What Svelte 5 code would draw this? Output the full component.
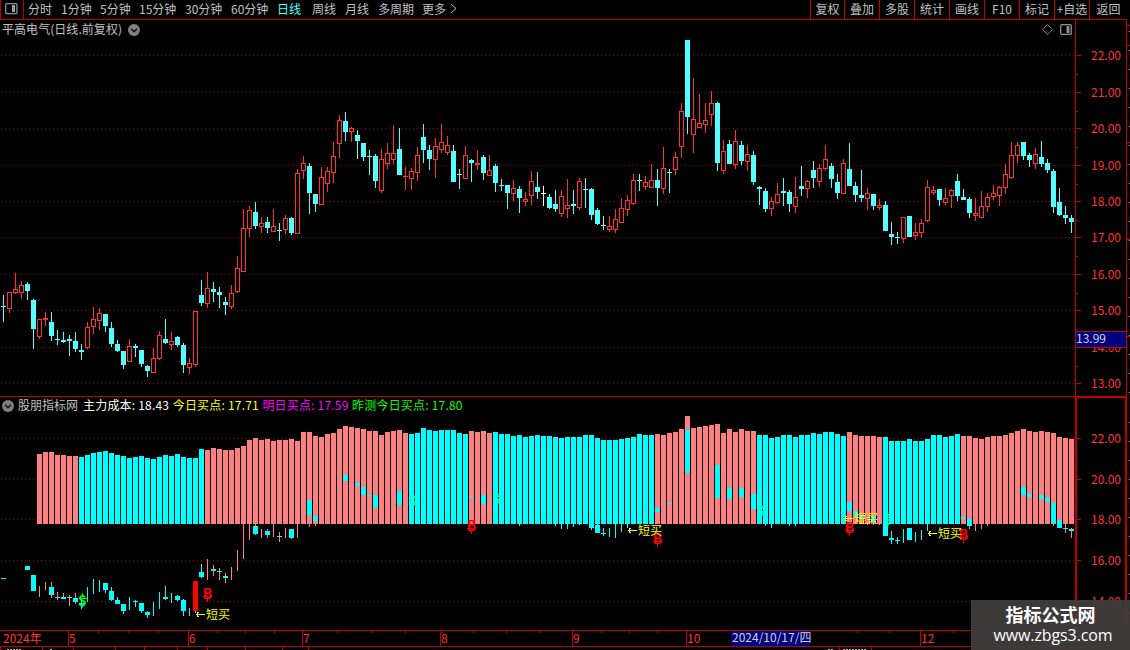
<script>
  const periods = [
    ['分时', 28], ['1分钟', 61], ['5分钟', 100], ['15分钟', 139], ['30分钟', 185],
    ['60分钟', 231], ['日线', 277], ['周线', 312], ['月线', 345], ['多周期', 378], ['更多', 422],
  ];
  const tools = ['复权', '叠加', '多股', '统计', '画线', 'F10', '标记', '+自选', '返回'];

  // kind (c falling, r rising, w unchanged), high, body top, body bottom, low
  const raw = `c 295 306 307 322,r 292 292 309 313,r 273 289 293 294,r 281 285 293 299,c 282 284 291 300,c 299 300 329 349
r 319 319 337 339,r 312 318 320 326,c 312 322 336 341,c 330 339 340 345,c 332 340 342 343,c 335 339 341 356
c 332 341 349 352,c 344 350 352 360,r 322 327 348 349,r 307 319 327 334,r 308 313 321 330,c 314 314 326 332
c 322 328 344 347,c 340 344 351 352,c 351 351 365 369,r 339 346 362 362,c 344 346 348 357,c 350 350 364 367
c 365 366 371 377,r 348 358 373 373,r 331 335 359 360,c 319 339 343 344,r 332 341 345 350,c 336 337 345 347
c 343 345 365 373,r 358 363 368 374,r 311 311 365 367,c 280 295 303 306,r 272 288 304 308,c 282 289 292 302
c 287 292 295 308,c 297 302 305 315,r 285 293 307 309,r 256 268 292 293,r 209 228 272 272,r 206 210 229 237
c 202 212 226 229,r 217 223 227 233,c 217 222 228 233,r 209 226 232 232,c 223 230 231 241,r 215 218 230 234
c 217 218 233 235,r 169 173 234 234,r 156 163 171 179,c 163 166 193 214,c 194 194 204 212,r 167 177 205 205
r 167 171 184 192,r 142 156 173 183,r 115 120 144 158,c 112 121 132 141,r 127 128 132 142,c 130 135 141 159
c 143 143 157 161,c 150 156 157 175,c 154 156 181 188,r 149 159 191 193,r 143 153 164 169,r 125 153 160 164
c 128 149 175 175,r 167 176 177 190,r 168 171 179 190,r 147 155 173 181,c 124 137 150 163,c 145 150 159 170
r 138 146 160 178,r 124 142 150 153,r 136 145 153 155,c 145 151 182 182,c 169 174 175 189,r 146 155 179 179
c 159 160 163 182,r 150 163 165 170,c 155 157 173 180,r 155 170 176 176,c 164 166 183 192,c 179 185 186 191
c 185 185 193 209,r 180 188 194 201,c 186 189 198 213,r 192 199 202 206,r 171 181 196 205,c 172 187 192 199
w 186 193 194 206,c 194 197 208 209,c 190 204 209 212,r 190 196 214 217,r 179 205 209 218,c 190 204 206 214
r 178 181 208 210,c 178 189 190 208,c 188 189 215 220,c 208 210 224 225,c 216 225 226 230,r 216 226 230 232
r 209 219 230 233,r 198 208 223 223,r 195 200 210 216,r 174 180 204 205,c 174 180 181 191,r 176 182 187 190
r 164 180 188 188,c 169 180 188 206,r 147 168 189 194,c 169 172 173 193,r 152 157 170 175,r 103 111 147 158
c 40 40 117 134,r 78 119 135 153,r 94 123 128 128,r 103 120 125 133,r 91 103 115 126,c 102 103 163 171
r 140 151 171 174,c 140 144 164 164,r 130 141 165 169,c 141 145 161 165,r 145 154 162 171,c 151 155 182 185
c 186 187 189 205,c 188 191 209 212,r 197 201 209 216,r 183 194 203 204,c 178 191 193 206,c 190 192 204 212
r 177 197 207 213,c 166 186 189 196,r 180 181 189 198,c 161 170 178 188,r 164 168 182 187,r 145 159 169 171
c 163 166 179 188,c 174 182 193 199,r 159 163 194 194,c 143 169 186 186,c 182 186 195 202,c 170 195 198 202
r 188 193 199 210,c 194 194 206 210,r 199 205 208 210,c 201 205 231 231,c 222 234 237 245,c 232 237 238 244
r 217 217 239 243,c 216 216 237 237,r 223 232 236 240,r 219 223 233 238,r 180 187 221 222,r 186 190 193 195
c 189 189 200 206,r 188 198 203 205,r 189 190 196 208,c 174 181 196 201,c 189 197 200 200,c 197 199 213 218
r 198 213 216 221,r 191 206 218 218,r 193 197 207 212,r 185 193 197 200,r 186 187 196 206,r 164 174 188 194
r 142 155 178 179,r 142 145 156 163,c 142 142 156 160,c 153 155 160 167,r 148 154 164 169,c 141 157 164 167
c 159 163 170 173,c 169 171 207 213,c 188 202 215 216,c 206 215 218 224,c 215 218 222 233`;

  const candles = raw.split(/[,\n]/).map((row, i) => {
    const [kind, ...v] = row.trim().split(' ');
    const [high, top, bottom, low] = v.map(Number);
    return { kind, x: 3 + i * 6, high, top, bottom, low };
  });

  // upper edge of the cost bars, starting with the seventh candle
  const barTops = [
    454, 452, 452, 455, 455, 456, 456, 457, 455, 453, 452, 451, 453, 455, 456, 458, 457, 456, 458, 459,
    457, 455, 456, 454, 457, 458, 458, 449, 450, 448, 449, 450, 450, 448, 446, 440, 438, 440, 439, 441,
    440, 440, 439, 441, 432, 432, 436, 437, 434, 433, 429, 426, 427, 428, 429, 431, 431, 435, 432, 431,
    430, 433, 434, 433, 428, 430, 431, 430, 430, 430, 433, 434, 431, 432, 431, 433, 432, 434, 434, 436,
    435, 437, 436, 435, 436, 436, 437, 438, 437, 437, 437, 435, 435, 438, 440, 440, 440, 439, 438, 437,
    434, 435, 435, 434, 435, 433, 432, 429, 416, 428, 427, 426, 425, 424, 433, 429, 432, 429, 431, 431,
    435, 435, 438, 437, 435, 435, 437, 435, 435, 433, 434, 432, 432, 434, 436, 432, 435, 436, 436, 436,
    437, 437, 441, 441, 441, 439, 441, 441, 439, 435, 435, 437, 436, 434, 436, 436, 438, 439, 437, 436,
    436, 435, 433, 431, 429, 431, 432, 431, 432, 433, 437, 438, 439,
  ];
  const pinkRanges = [[6, 12], [34, 67], [78, 81], [109, 125], [141, 146], [160, 178]];
  const barColor = (i) => (pinkRanges.some(([a, b]) => i >= a && i <= b) ? '#ff8080' : '#00ffff');

  const bars = barTops.map((top, k) => ({ x: 1 + (k + 6) * 6, top, color: barColor(k + 6) }));
  const sub = (y) => Math.round(438 + (y - 55) * 0.5595);
  const subCandles = candles.map((c, i) => ({
    ...c,
    i,
    high: sub(c.high),
    top: sub(c.top),
    bottom: Math.max(sub(c.bottom), sub(c.top) + 1),
    low: sub(c.low),
    color: barColor(i),
  }));

  const mainGrid = [55, 92, 128, 165, 201, 237, 274, 310, 347, 383];
  const subGrid = [438, 479, 519, 560, 601];
  const candleColor = { c: '#54ffff', r: '#ff3232', w: '#ffffff' };

  const buys = [[207, 593], [471, 525], [657, 538], [849, 527], [963, 534]];
  const sells = [[82, 600], [412, 500], [496, 498], [760, 510], [887, 519]];
  const hints = [[195, 619], [627, 535], [843, 523], [927, 538]];
  const months = [['5', 68], ['6', 188], ['7', 302], ['8', 440], ['9', 572], ['10', 686], ['12', 920]];
  const dateTicks = [98, 128, 158, 217, 245, 274, 337, 371, 405, 473, 506, 539, 601, 629, 657, 857, 889, 953];
  const footMarks = [0, 42, 73, 115, 144, 177, 207, 245, 282, 308, 839, 871];
</script>

<div class="terminal">
  <header>
    <div class="layout-btn">
      <svg width="13" height="12" viewBox="0 0 13 12">
        <rect x=".7" y=".7" width="11.200" height="10" rx="1" fill="none" stroke="#909090" stroke-width="1.300" />
        <rect x="7" y="2" width="3" height="7" fill="#a0a0a0" />
      </svg>
    </div>
    <nav>
      {#each periods as [name, x], i}
        <span class:active={name === '日线'} style="width: {(periods[i + 1]?.[1] ?? 450) - x}px">{name}</span>
      {/each}
      <svg width="7" height="11" viewBox="0 0 7 11"><path d="M1 1l5 4.500-5 4.500" fill="none" stroke="#c0c0c0" /></svg>
    </nav>
    <div class="tools">
      {#each tools as tool}<span>{tool}</span>{/each}
    </div>
  </header>

  <section class="main-panel">
    <div class="plot">
      <div class="title">
        <span>平高电气(日线.前复权)</span>
        <svg class="toggle" width="12" height="12" viewBox="0 0 12 12">
          <circle cx="6" cy="6" r="6" fill="#808080" />
          <path d="M3 4.800l3 3 3-3" fill="none" stroke="#111" stroke-width="1.500" />
        </svg>
        <svg class="corner" width="30" height="12" viewBox="0 0 30 12">
          <path d="M5.500 .5l5 5-5 5-5-5z" fill="none" stroke="#808080" />
          <rect x="18.700" y=".7" width="10.600" height="9.600" rx="1" fill="none" stroke="#909090" stroke-width="1.300" />
          <rect x="24.500" y="2" width="3" height="7" fill="#909090" />
        </svg>
      </div>
      <svg class="chart" width="1075" height="357" viewBox="0 39 1075 357">
        {#each mainGrid as y}
          <path class="grid" d="M1 {y + 0.5}H1075" />
        {/each}
        {#each candles as c}
          <rect x={c.x} y={c.high} width="1" height={c.low - c.high} fill={candleColor[c.kind]} />
          {#if c.kind === 'r' && c.bottom - c.top > 2}
            <rect x={c.x - 1.5} y={c.top + 0.5} width="4" height={c.bottom - c.top - 1} fill="#000" stroke="#ff3232" />
          {:else}
            <rect x={c.x - 2} y={c.top} width="5" height={c.bottom - c.top} fill={candleColor[c.kind]} />
          {/if}
        {/each}
      </svg>
    </div>
    <svg class="axis" width="55" height="376" viewBox="1075 20 55 376">
      <path class="rule" d="M1075.500 20V396M1126.500 20V396" />
      {#each mainGrid as y, i}
        <path class="rule" d="M1076 {y + 0.5}h5" />
        {#if i < 9}<path class="rule" d="M1076 {Math.round(y + 18.500) + 0.5}h2" />{/if}
        <text x="1091" y={y + 5}>{22 - i}.00</text>
      {/each}
      <rect x="1075.500" y="331.500" width="51" height="16" fill="#000080" stroke="#c00000" />
      <text class="cursor" x="1076" y="343">13.99</text>
      <path class="rule" d="M1127 25.500h3M1127 45.500h3M1127 142.500h3M1127 239.500h3M1127 336.500h3" />
      <path class="edge" d="M1129.500 31V396" />
    </svg>
  </section>

  <section class="sub-panel">
    <div class="plot">
      <div class="title indicators">
        <svg class="toggle" width="12" height="12" viewBox="0 0 12 12">
          <circle cx="6" cy="6" r="6" fill="#808080" />
          <path d="M3 4.800l3 3 3-3" fill="none" stroke="#111" stroke-width="1.500" />
        </svg>
        <span class="name">股朋指标网</span>
        <span class="value cost">主力成本: 18.43</span>
        <span class="value today">今日买点: 17.71</span>
        <span class="value tomorrow">明日买点: 17.59</span>
        <span class="value guess">昨测今日买点: 17.80</span>
      </div>
      <svg class="chart" width="1075" height="215" viewBox="0 415 1075 215">
        {#each subGrid as y}
          <path class="grid" d="M1 {y + 0.5}H1075" />
        {/each}
        {#each sells as [x, y]}
          <text class="sell" x={x + 0.5} y={y + 6}>$</text>
          <path d="M{x - 3} {y - 1.5}h8" stroke="#0f0" />
        {/each}
        {#each bars as b}
          <rect x={b.x} y={b.top} width="5" height={524 - b.top} fill={b.color} />
        {/each}
        {#each subCandles as c}
          {#if c.i > 5}
            <rect x={c.x} y={c.high} width="1" height={c.low - c.high} fill={c.color} />
          {/if}
          {#if c.kind === 'c'}
            <rect x={c.x - 2} y={c.top} width="5" height={c.bottom - c.top} fill="#0ff" />
          {/if}
        {/each}
        {#each buys as [x, y]}
          <text class="buy" x={x + 0.5} y={y + 6}>B</text>
          <path d="M{x - 4} {y + 3.5}h9M{x + 0.5} {y + 5}v4" stroke="#f00" stroke-width="1.500" />
        {/each}
        <rect x="193" y="581" width="5" height="30" fill="#f00" />
        {#each hints as [x, y]}
          <path d="M{x + 1} {y - 4.500}h9M{x + 3.500} {y - 7}l-2 2.500 2 2.500" fill="none" stroke="#ff0" />
          <text class="hint" x={x + 11} {y}>短买</text>
        {/each}
      </svg>
    </div>
    <svg class="axis" width="55" height="234" viewBox="1075 396 55 234">
      <path class="rule" d="M1075 396.500h52M1076 397.500h51" />
      <path class="rule thick" d="M1076 397V630M1126 397V630" />
      {#each subGrid as y, i}
        <path class="rule" d="M1077 {y + 0.5}h4M1077 {y + 21}h1" />
        <text x="1091" y={y + 5}>{22 - i * 2}.00</text>
      {/each}
      <path class="edge" d="M1129.500 422V630" />
    </svg>
  </section>

  <footer>
    <svg width="1130" height="20" viewBox="0 630 1130 20">
      <path class="rule" d="M0 630.500H1130M0 646.500H1130" />
      {#each dateTicks as x}
        <path class="rule" d="M{x + 0.5} 631v2" />
      {/each}
      <text x="3" y="643">2024年</text>
      {#each months as [label, x]}
        <path class="rule" d="M{x + 0.5} 631v15" />
        <text x={x + 1} y="643">{label}</text>
      {/each}
      <rect x="731" y="631" width="79" height="15" fill="#000080" />
      <text class="cursor" x="732" y="642">2024/10/17/四</text>
      {#each footMarks as x}
        <path class="rule" d="M{x + 0.5} 647v3" />
      {/each}
      <path d="M7 649.500H21M50 649.500h3M828 649.500h5M843 649.500h24" stroke="#c0c0c0" stroke-dasharray="2 1" />
    </svg>
  </footer>

  <aside class="watermark">
    <strong>指标公式网</strong>
    <span>www.zbgs3.com</span>
  </aside>
</div>

<style>
  :global(body) {
    margin: 0;
    background: #000;
  }
  .terminal {
    position: relative;
    width: 1130px;
    height: 650px;
    overflow: hidden;
    background: #000;
    color: #c0c0c0;
    font: 12px/18px "Noto Sans CJK SC", sans-serif;
  }
  svg {
    display: block;
    flex-shrink: 0;
  }
  header {
    display: flex;
    box-sizing: border-box;
    width: 1127px;
    height: 20px;
    border-bottom: 1px solid #c00000;
    border-left: 1px solid #c00000;
    line-height: 17px;
  }
  .layout-btn {
    display: flex;
    box-sizing: border-box;
    width: 23px;
    padding: 3px 0 0 4px;
    border-right: 1px solid #c00000;
  }
  nav {
    display: flex;
    height: 17px;
    padding-left: 4px;
    white-space: nowrap;
  }
  nav svg {
    margin-top: 3px;
  }
  .active {
    color: #54ffff;
  }
  .tools {
    display: flex;
    margin-left: auto;
  }
  .tools span {
    box-sizing: border-box;
    width: 35px;
    border-left: 1px solid #c00000;
    text-align: center;
    white-space: nowrap;
  }
  .tools span:first-child {
    width: 34px;
  }
  .tools span:last-child {
    width: 38px;
  }
  .main-panel,
  .sub-panel {
    display: flex;
  }
  .main-panel {
    height: 376px;
  }
  .sub-panel {
    height: 234px;
  }
  .plot {
    width: 1075px;
  }
  .title {
    display: flex;
    align-items: center;
    height: 19px;
    padding-left: 2px;
    gap: 6px;
    white-space: nowrap;
  }
  .title span {
    line-height: 16px;
    padding-bottom: 2px;
    letter-spacing: 0.05px;
  }
  .corner {
    margin: 0 3px 0 auto;
  }
  .indicators {
    box-sizing: border-box;
    border-top: 1px solid #c00000;
    gap: 0;
  }
  .indicators .name {
    width: 65px;
    padding-left: 4px;
    box-sizing: content-box;
    letter-spacing: 0;
  }
  .title .value {
    width: 89.7px;
    letter-spacing: 0.2px;
  }
  .cost {
    color: #fff;
  }
  .today {
    color: #ff0;
  }
  .tomorrow {
    color: #f0f;
  }
  .guess {
    color: #0f0;
  }
  .chart {
    shape-rendering: crispEdges;
  }
  .grid {
    stroke: #a00000;
    stroke-dasharray: 1 3;
  }
  .rule {
    stroke: #c00000;
    shape-rendering: crispEdges;
  }
  .thick {
    stroke-width: 2;
  }
  .edge {
    stroke: #c0c0c0;
    stroke-dasharray: 1 18;
  }
  footer svg {
    overflow: visible;
  }
  text {
    fill: #ff3232;
    font-size: 12px;
  }
  .cursor {
    fill: #d0d0d0;
  }
  .buy,
  .sell {
    font-size: 15px;
    font-weight: bold;
    text-anchor: middle;
    fill: #f00;
  }
  .buy {
    font-size: 14px;
  }
  .sell {
    fill: #0f0;
  }
  .hint {
    fill: #ff0;
  }
  .watermark {
    position: absolute;
    right: 0;
    bottom: 0;
    display: flex;
    flex-direction: column;
    align-items: center;
    box-sizing: border-box;
    width: 159px;
    height: 50px;
    padding-top: 4px;
    background: rgba(64, 60, 60, 0.95);
    color: #fff;
  }
  .watermark strong {
    font-size: 18px;
    line-height: 21px;
  }
  .watermark span {
    padding-left: 5px;
    font: 16px/21px "Open Sans", sans-serif;
    letter-spacing: -0.1px;
  }
</style>
